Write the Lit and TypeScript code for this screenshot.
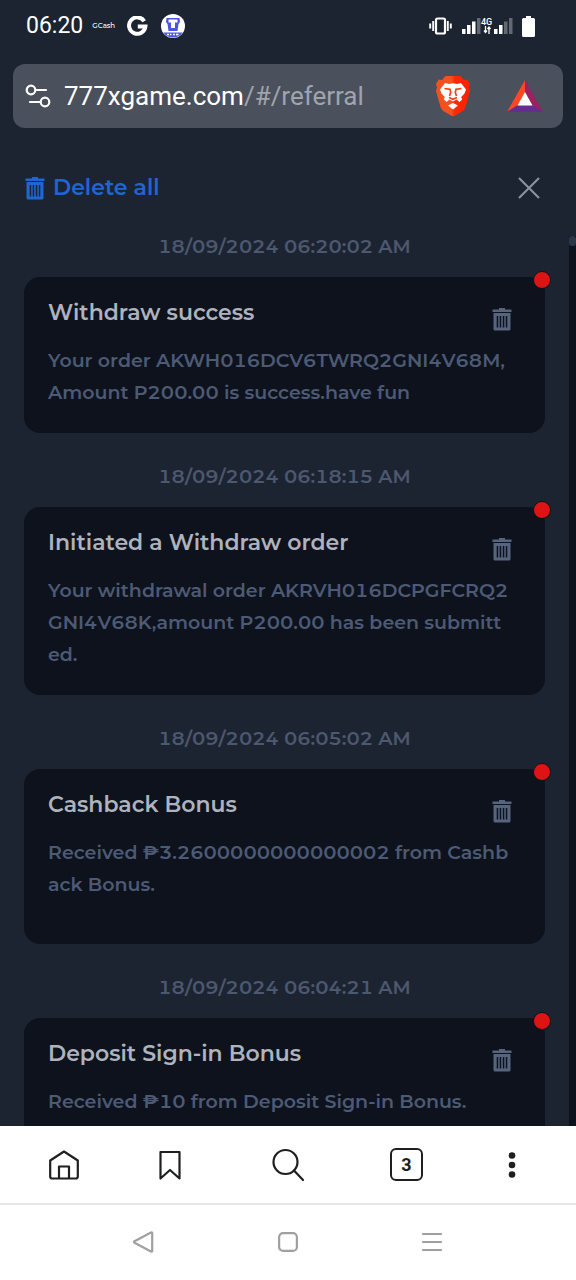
import { LitElement, html, css } from "lit";
import { customElement, property } from "lit/decorators.js";

interface Message {
  time: string;
  title: string;
  lines: string[];
  roomy?: boolean;
}

const MESSAGES: Message[] = [
  {
    time: "18/09/2024 06:20:02 AM",
    title: "Withdraw success",
    lines: ["Your order AKWH016DCV6TWRQ2GNI4V68M,", "Amount P200.00 is success.have fun"],
  },
  {
    time: "18/09/2024 06:18:15 AM",
    title: "Initiated a Withdraw order",
    lines: ["Your withdrawal order AKRVH016DCPGFCRQ2", "GNI4V68K,amount P200.00 has been submitt", "ed."],
  },
  {
    time: "18/09/2024 06:05:02 AM",
    title: "Cashback Bonus",
    lines: ["Received ₱3.2600000000000002 from Cashb", "ack Bonus."],
    roomy: true,
  },
  {
    time: "18/09/2024 06:04:21 AM",
    title: "Deposit Sign-in Bonus",
    lines: ["Received ₱10 from Deposit Sign-in Bonus."],
  },
];

const trashIcon = html`<svg width="20" height="23" viewBox="0 0 20 23" fill="currentColor" aria-hidden="true">
  <path d="M7 0h6v1.5h6.5v2.5H.5V1.5H7z" />
  <path fill-rule="evenodd" d="M1.500 5h17v16a1.500 1.500 0 0 1-1.500 1.500h-14a1.500 1.500 0 0 1-1.500-1.500zM4.700 8v11.500h1.500V8zM7.700 8v11.500h1.500V8zM10.800 8v11.500h1.500V8zM13.800 8v11.500h1.500V8z" />
</svg>`;

@customElement("status-bar")
export class StatusBar extends LitElement {
  static styles = css`
    :host {
      display: flex;
      align-items: center;
      justify-content: space-between;
      height: 52px;
      padding: 0 41px 0 26px;
      color: #fff;
      font-family: Roboto, sans-serif;
    }
    .group {
      display: flex;
      align-items: center;
    }
    .time {
      font-size: 23px;
      font-weight: 400;
      line-height: 28px;
    }
    .carrier {
      margin: 0 12px 0 9px;
      font: 500 7px/12px Montserrat, sans-serif;
    }
    .round {
      margin-left: 13px;
    }
    svg {
      display: block;
    }
    .signal {
      margin-left: 10px;
    }
    .battery {
      margin-left: 9px;
    }
  `;

  render() {
    return html`
      <div class="group">
        <span class="time">06:20</span>
        <span class="carrier">GCash</span>
        <svg width="21" height="21" viewBox="0 0 21 21" aria-label="Google">
          <path d="M17.2 5.2A8.2 8.2 0 1 0 18.4 10.5H10.8" fill="none" stroke="#fff" stroke-width="4" />
        </svg>
        <svg class="round" width="24" height="24" viewBox="0 0 24 24" aria-hidden="true">
          <circle cx="12" cy="12" r="12" fill="#fff" />
          <path d="M2.200 18.500h19.600A12 12 0 0 1 2.200 18.500z" fill="#4d55dc" />
          <path d="M5.500 4h13l.5 4-1.500 2-1 7h-9l-1-7L5 8z" fill="#4a55e0" />
          <path d="M7.500 5.500h9v3h-2.500V14h-4V8.500H7.500z" fill="#fff" />
          <path d="M6 20.500h2m1 0h1.500m1.500 0h2m1 0h2.500" stroke="#fff" stroke-width="1.400" />
        </svg>
      </div>
      <div class="group">
        <svg width="23" height="18" viewBox="0 0 23 18" fill="none" stroke="#fff" aria-label="Vibrate">
          <rect x="7" y="1.500" width="9" height="15" rx="1.500" stroke-width="2.200" />
          <path d="M4.200 4v10M18.800 4v10M1.200 6.500v5M21.800 6.500v5" stroke-width="1.900" />
        </svg>
        <svg class="signal" width="51" height="20" viewBox="0 0 51 20" aria-label="Signal">
          <g fill="#fff">
            <rect x="0" y="13" width="3.500" height="5" />
            <rect x="5" y="9" width="3.500" height="9" />
            <rect x="10" y="5.500" width="3.500" height="12.500" />
            <rect x="32" y="13" width="3.500" height="5" />
            <rect x="37" y="9" width="3.500" height="9" />
          </g>
          <g fill="#626973">
            <rect x="15" y="2" width="3.500" height="16" />
            <rect x="42" y="5.500" width="3.500" height="12.500" />
            <rect x="47" y="2" width="3.500" height="16" />
          </g>
          <text x="19" y="9" font-size="9" font-weight="500" fill="#fff">4G</text>
          <path d="M23.500 10v6M22 14.500l1.500 2 1.500-2M27 18v-6M25.500 13l1.500-2 1.500 2" fill="none" stroke="#fff" stroke-width="1.300" />
        </svg>
        <svg class="battery" width="13" height="21" viewBox="0 0 13 21" fill="#fff" aria-label="Battery">
          <path d="M4 0h5v2h2.500A1.500 1.500 0 0 1 13 3.500v16a1.500 1.500 0 0 1-1.500 1.500h-10A1.500 1.500 0 0 1 0 19.500v-16A1.500 1.500 0 0 1 1.500 2H4z" />
        </svg>
      </div>
    `;
  }
}

@customElement("address-bar")
export class AddressBar extends LitElement {
  static styles = css`
    :host {
      display: flex;
      align-items: center;
      height: 64px;
      margin: 12px 13px 0;
      padding: 0 20px 0 12px;
      border-radius: 12px;
      background: #4a505c;
      box-sizing: border-box;
    }
    button {
      padding: 0;
      border: 0;
      background: none;
      color: #fff;
      cursor: pointer;
    }
    svg {
      display: block;
    }
    .url {
      flex: 1;
      margin-left: 12px;
      text-align: left;
      font: 400 26px/34px Roboto, sans-serif;
    }
    .path {
      color: #a0a4ac;
    }
    .rewards {
      margin-left: 36px;
    }
  `;

  render() {
    return html`
      <button aria-label="Site settings">
        <svg width="27" height="26" viewBox="0 0 27 26" fill="none" stroke="#fff" stroke-width="2.200" stroke-linecap="round">
          <circle cx="6" cy="7" r="4.300" />
          <path d="M11 7h10" />
          <circle cx="20" cy="19" r="4.300" />
          <path d="M5 19h10.500" />
        </svg>
      </button>
      <button class="url">777xgame.com<span class="path">/#/referral</span></button>
      <button aria-label="Brave Shields">
        <svg width="36" height="42" viewBox="0 0 36 42">
          <defs>
            <linearGradient id="lion">
              <stop offset="0" stop-color="#f1521d" />
              <stop offset=".45" stop-color="#f4511e" />
              <stop offset=".55" stop-color="#ff2a00" />
              <stop offset="1" stop-color="#ff2000" />
            </linearGradient>
          </defs>
          <path fill="url(#lion)" d="M10.500 1h15l3.500 4 3.500-.5L35 9l-1 3.500 1 3.500-4.500 16q-1 3-3.500 4.500L20 40.500q-2 1.300-4 0l-7-4Q6.500 35 5.500 32L1 16l1-3.500L1 9l2.500-4.500L7 5z" />
          <path fill="#fff" d="M10 8l4 1 4-.7 4 .7 4-1 5 6.500-1.500 4-3.300 3.500 1 2.500-2.700 2.500-3-2.500-3.500 2-3.500-2-3 2.500L8.800 24.500l1-2.500-3.300-3.500-1.500-4z" />
          <path fill="none" stroke="#fb3f12" stroke-width="1.700" d="M9.500 13.500l5.500.8.700 3.200-1.200 3.500M26.500 13.500l-5.500.8-.7 3.200 1.200 3.500M14 22.500l4 1.800 4-1.800" />
          <path fill="#fff" d="M18 28l5 2.500-5 4-5-4z" />
        </svg>
      </button>
      <button class="rewards" aria-label="Rewards">
        <svg width="36" height="34" viewBox="0 0 36 34">
          <path d="M18 1v12L11 26 0 33z" fill="#ff4724" />
          <path d="M18 1v12l7 13 11 7z" fill="#9e1f63" />
          <path d="M0 33l11-7h14l11 7z" fill="#662d91" />
          <path d="M18 13l7.500 13.500h-15z" fill="#fff" />
        </svg>
      </button>
    `;
  }
}

@customElement("message-card")
export class MessageCard extends LitElement {
  @property({ attribute: false }) message!: Message;

  static styles = css`
    :host {
      display: block;
    }
    .time {
      display: block;
      margin-bottom: 15px;
      text-align: center;
      font-size: 19px;
      line-height: 30px;
      color: #4c586e;
    }
    .card {
      position: relative;
      padding: 24px;
      border-radius: 16px;
      background: #0d121c;
    }
    .roomy {
      padding-bottom: 43px;
    }
    .head {
      display: flex;
      align-items: flex-start;
      justify-content: space-between;
      height: 24px;
      margin-bottom: 20px;
      padding-right: 9px;
    }
    h2 {
      margin: 0;
      font-size: 22px;
      font-weight: 600;
      line-height: 24px;
      color: #aeb3bd;
    }
    p {
      margin: 0;
      font-size: 19px;
      line-height: 32px;
      white-space: nowrap;
      color: #4c5a75;
    }
    button {
      margin-top: 7px;
      padding: 0;
      border: 0;
      background: none;
      color: #56647e;
      cursor: pointer;
    }
    svg {
      display: block;
    }
    .unread {
      position: absolute;
      top: -6px;
      right: -6px;
      width: 16px;
      height: 16px;
      border: 1px solid #0d121c;
      border-radius: 50%;
      background: #dd1414;
    }
  `;

  render() {
    const { time, title, lines, roomy } = this.message;
    return html`
      <time class="time">${time}</time>
      <article class="card ${roomy ? "roomy" : ""}">
        <span class="unread"></span>
        <div class="head">
          <h2>${title}</h2>
          <button aria-label="Delete message">${trashIcon}</button>
        </div>
        <p>${lines.map((line, i) => (i ? html`<br />${line}` : line))}</p>
      </article>
    `;
  }
}

@customElement("browser-nav")
export class BrowserNav extends LitElement {
  static styles = css`
    :host {
      display: block;
      background: #fff;
    }
    nav {
      display: grid;
      align-items: center;
      justify-items: center;
    }
    .tools {
      grid-template-columns: 128fr 83fr 154fr 83fr 128fr;
      height: 77px;
      border-bottom: 2px solid #e6e6e6;
    }
    .system {
      grid-template-columns: repeat(3, 1fr);
      height: 73px;
      padding: 0 72px 2px;
    }
    button {
      padding: 0;
      border: 0;
      background: none;
      color: #1e1f20;
      cursor: pointer;
    }
    .tabs {
      width: 33px;
      height: 33px;
      border: 2px solid #1e1f20;
      border-radius: 6px;
      font: 700 18px/28px Roboto, sans-serif;
    }
    .system button {
      color: #a0a0a0;
    }
    svg {
      display: block;
      fill: none;
      stroke: currentColor;
      stroke-width: 2.200;
      stroke-linejoin: round;
      stroke-linecap: round;
    }
    .dots {
      fill: currentColor;
      stroke: none;
    }
  `;

  render() {
    return html`
      <nav class="tools" aria-label="Browser">
        <button aria-label="Home">
          <svg width="30" height="30" viewBox="0 0 30 30">
            <path d="M1.200 10.500L15 1.500l13.800 9V26.500a2 2 0 0 1-2 2H3.200a2 2 0 0 1-2-2zM10 28.500V16.500h10v12" />
          </svg>
        </button>
        <button aria-label="Bookmarks">
          <svg width="22" height="30" viewBox="0 0 22 30"><path d="M1.500 2h19v26.500L11 20l-9.500 8.500z" /></svg>
        </button>
        <button aria-label="Search">
          <svg width="34" height="34" viewBox="0 0 34 34"><circle cx="14.500" cy="14" r="12" /><path d="M23 22.500L32 32" /></svg>
        </button>
        <button class="tabs" aria-label="3 tabs">3</button>
        <button aria-label="Menu">
          <svg class="dots" width="8" height="28" viewBox="0 0 8 28">
            <circle cx="4" cy="4.500" r="3.300" /><circle cx="4" cy="14" r="3.300" /><circle cx="4" cy="23.500" r="3.300" />
          </svg>
        </button>
      </nav>
      <nav class="system" aria-label="System">
        <button aria-label="Back">
          <svg width="22" height="22" viewBox="0 0 22 22"><path d="M18 1.500q1.200-.5 1.200.8v17.400q0 1.300-1.200.8L1.500 11.800q-1-.8 0-1.600z" /></svg>
        </button>
        <button aria-label="Home screen">
          <svg width="20" height="20" viewBox="0 0 20 20"><rect x="1.100" y="1.100" width="17.800" height="17.800" rx="4" /></svg>
        </button>
        <button aria-label="Recent apps">
          <svg width="20" height="20" viewBox="0 0 20 20"><path d="M1 2h18M1 10h18M1 18h18" /></svg>
        </button>
      </nav>
    `;
  }
}

@customElement("app-root")
export class AppRoot extends LitElement {
  static styles = css`
    :host {
      display: flex;
      flex-direction: column;
      height: 100vh;
      background: #1c2432;
      font-family: Montserrat, Inter, sans-serif;
      font-weight: 600;
      font-variant-numeric: tabular-nums;
    }
    .toolbar {
      display: flex;
      align-items: center;
      justify-content: space-between;
      height: 24px;
      padding: 48px 36px 32px 25px;
    }
    button {
      display: flex;
      align-items: center;
      gap: 8px;
      padding: 0;
      border: 0;
      background: none;
      color: #8e949e;
      cursor: pointer;
    }
    .delete {
      font: inherit;
      font-size: 22px;
      line-height: 26px;
      color: #1f66d2;
    }
    .body {
      display: flex;
      flex: 1;
      min-height: 0;
    }
    .list {
      display: flex;
      flex-direction: column;
      gap: 29px;
      flex: 1;
      min-width: 0;
      padding: 0 24px;
      overflow: hidden;
    }
    message-card {
      flex: none;
    }
    .track {
      width: 7px;
      margin-top: 4px;
      background: #0d121c;
    }
    .thumb {
      height: 10px;
      border-radius: 3px;
      background: #2b3649;
    }
  `;

  render() {
    return html`
      <status-bar></status-bar>
      <address-bar></address-bar>
      <div class="toolbar">
        <button class="delete">${trashIcon}Delete all</button>
        <button aria-label="Close">
          <svg width="22" height="22" viewBox="0 0 22 22" fill="none" stroke="currentColor" stroke-width="2">
            <path d="M1 1l20 20M21 1L1 21" />
          </svg>
        </button>
      </div>
      <div class="body">
        <main class="list">
          ${MESSAGES.map((message) => html`<message-card .message=${message}></message-card>`)}
        </main>
        <div class="track"><div class="thumb"></div></div>
      </div>
      <browser-nav></browser-nav>
    `;
  }
}
